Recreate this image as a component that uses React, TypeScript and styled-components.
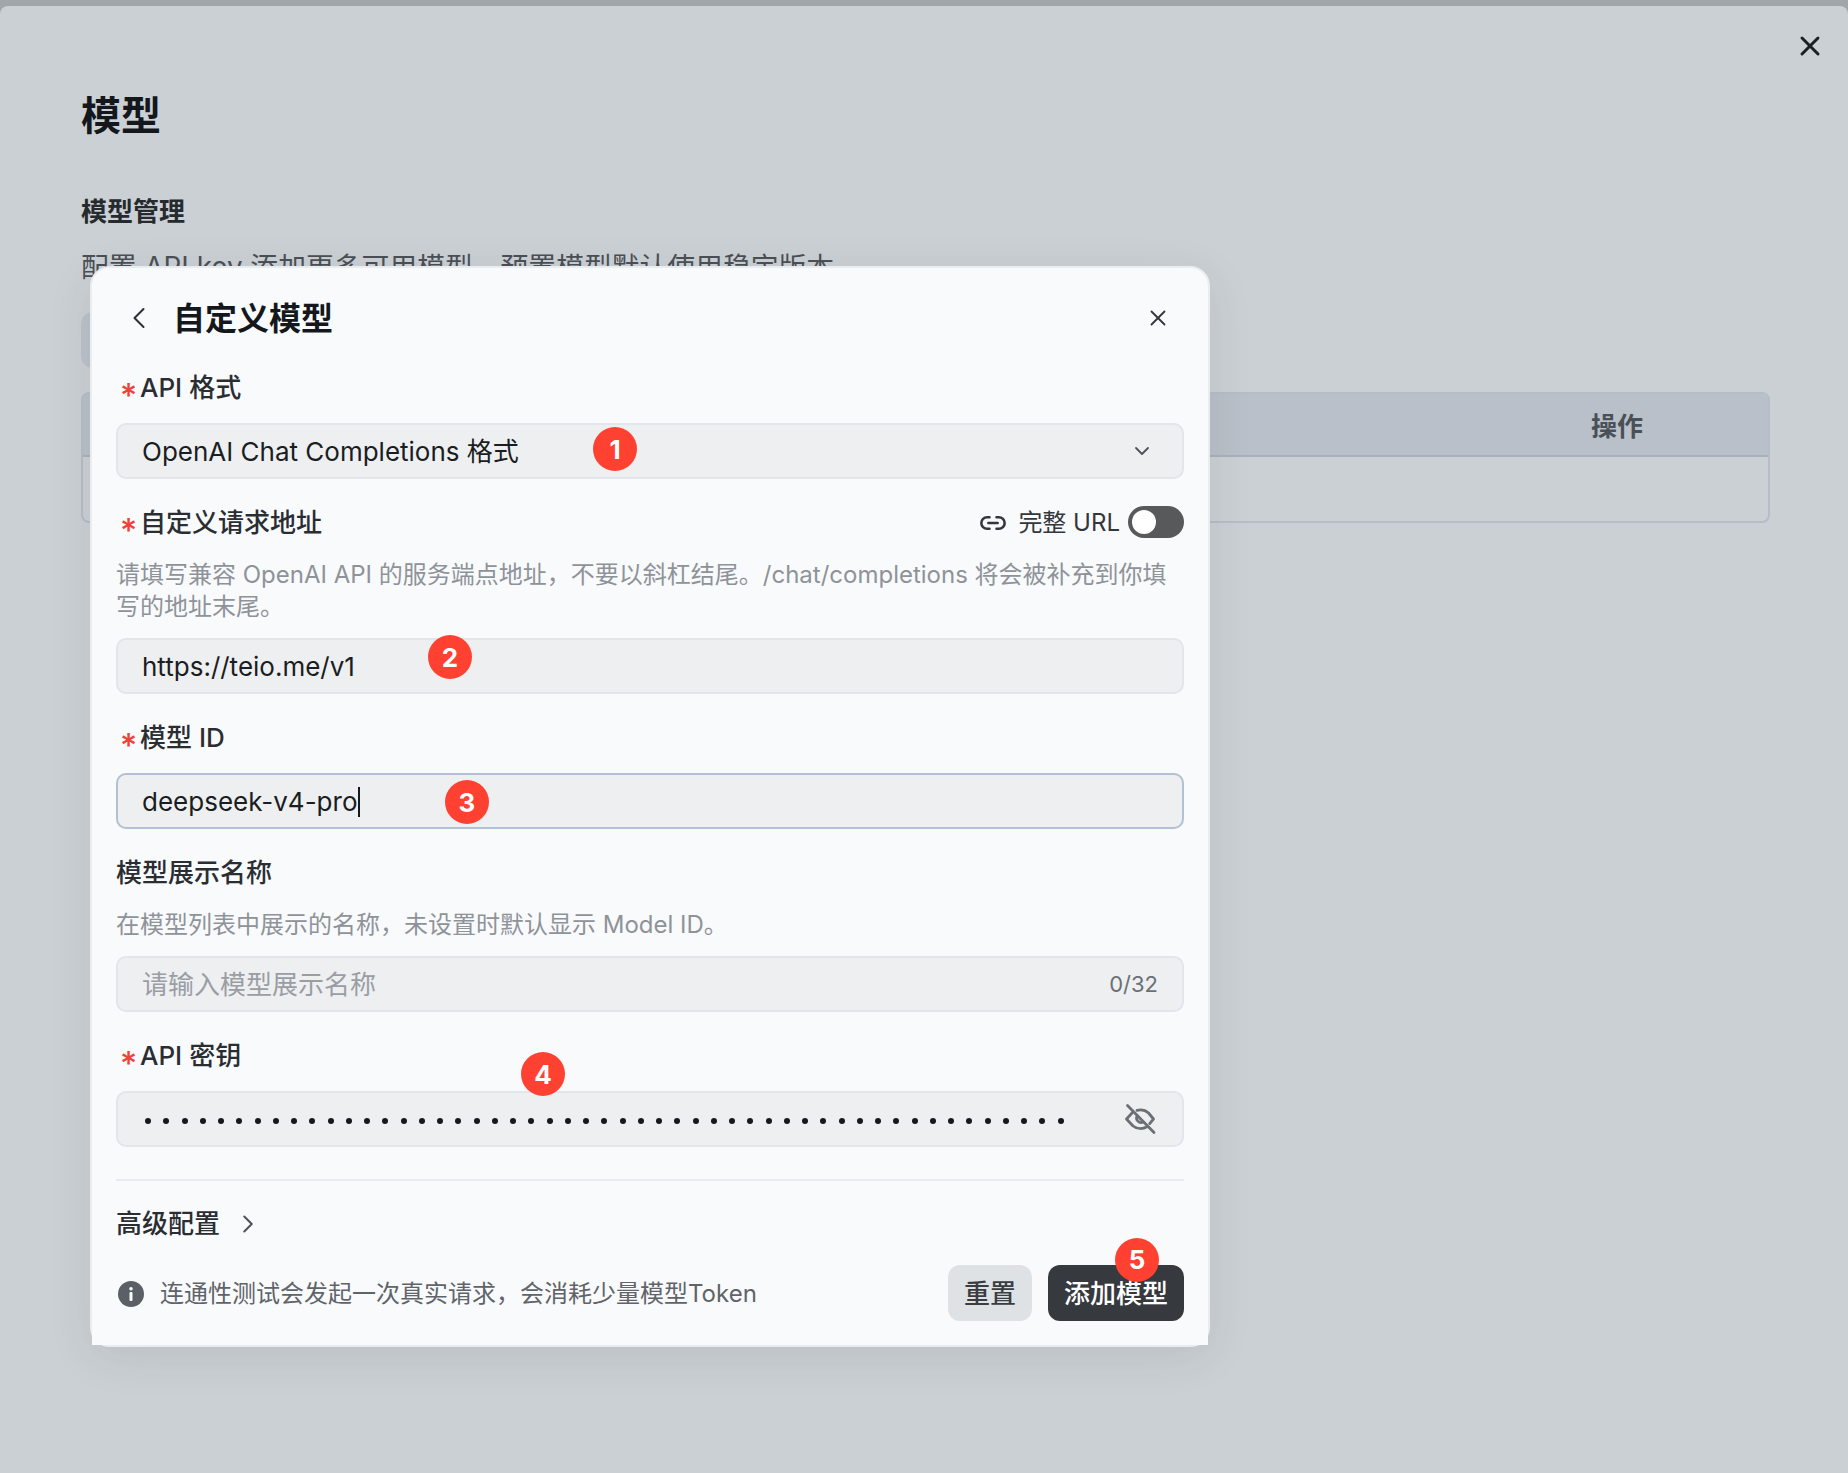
import React from 'react'
import styled, { createGlobalStyle } from 'styled-components'
import { X, ChevronLeft, ChevronDown, ChevronRight, Link2 } from 'lucide-react'

const GlobalStyle = createGlobalStyle`
  html, body {
    margin: 0;
    padding: 0;
    background: #a0a6aa;
  }
  body {
    font-family: Inter, "Noto Sans CJK SC", sans-serif;
    font-size: 26px;
    color: #1d2126;
  }
  * {
    box-sizing: border-box;
  }
`

const Page = styled.div`
  position: relative;
  width: 1848px;
  height: 1473px;
  padding-top: 6px;
  overflow: hidden;
`

const Backdrop = styled.div`
  height: 1467px;
  padding: 71px 78px 0 81px;
  background: #cbd0d4;
  border-radius: 8px 8px 0 0;
`

const PageClose = styled.button`
  position: absolute;
  top: 30px;
  right: 22px;
  width: 32px;
  height: 32px;
  padding: 0;
  border: none;
  background: none;
  color: #1b1f23;
  display: flex;
  align-items: center;
  justify-content: center;
`

const PageTitle = styled.h1`
  margin: 0;
  font-size: 40px;
  line-height: 78px;
  font-weight: 700;
  color: #14181c;
`

const SectionTitle = styled.h2`
  margin: 39px 0 0;
  font-size: 26px;
  line-height: 36px;
  font-weight: 600;
  color: #262a2f;
`

const SectionDesc = styled.p`
  margin: 19px 0 0;
  font-size: 27.8px;
  line-height: 36px;
  color: #4b5056;
`

const GhostButton = styled.div`
  width: 300px;
  height: 56px;
  margin-top: 27px;
  background: #bcc2c9;
  border-radius: 12px;
`

const Table = styled.div`
  margin-top: 24px;
  height: 131px;
  border: 2px solid #b6bdc8;
  border-radius: 8px;
  overflow: hidden;
`

const TableHead = styled.div`
  height: 63px;
  display: flex;
  align-items: center;
  justify-content: flex-end;
  padding-right: 125px;
  background: #b9c0c9;
  border-bottom: 2px solid #a9b1bd;
  font-size: 26px;
  font-weight: 600;
  color: #4a5057;
`

const Modal = styled.section`
  position: absolute;
  left: 90px;
  top: 266px;
  width: 1120px;
  padding: 20px 24px 0;
  background: #f9fafc;
  border: 2px solid #e9ecf0;
  border-radius: 20px;
  box-shadow: 0 10px 44px rgba(40, 46, 52, 0.1);
`

const ModalHeader = styled.header`
  height: 60px;
  display: flex;
  align-items: center;
  margin-bottom: 22px;
`

const BackButton = styled.span`
  display: flex;
  margin: 0 16px 0 5px;
  color: #2d3136;
`

const ModalTitle = styled.h3`
  flex: 1;
  margin: 0;
  padding-top: 2px;
  font-size: 32px;
  line-height: 44px;
  font-weight: 600;
  color: #14181c;
`

const ModalClose = styled.span`
  display: flex;
  margin-right: 13px;
  color: #33373c;
`

const Field = styled.div`
  position: relative;
  margin-bottom: 26px;
`

const LabelRow = styled.div<{ $gap?: number }>`
  display: flex;
  align-items: center;
  justify-content: space-between;
  height: 36px;
  margin-bottom: ${({ $gap }) => $gap ?? 17}px;
`

const Label = styled.label`
  display: flex;
  align-items: center;
  font-size: 26px;
  line-height: 36px;
  font-weight: 500;
  color: #2a2e33;
`

const Star = styled.span`
  width: 20px;
  margin-left: 4px;
  padding-top: 15px;
  color: #ef4136;
  font-size: 33px;
  line-height: 33px;
  font-weight: 500;
`

const Help = styled.p`
  margin: 0 0 15px;
  font-size: 24px;
  line-height: 32px;
  color: #8e9399;
`

const InputBox = styled.div<{ $focus?: boolean }>`
  display: flex;
  align-items: center;
  height: 56px;
  padding: 0 24px;
  background: #eeeff1;
  border: 2px solid ${({ $focus }) => ($focus ? '#b3bfd2' : '#e2e6eb')};
  border-radius: 10px;
  font-size: 26px;
  color: #1a1e22;
`

const InputValue = styled.span<{ $muted?: boolean }>`
  flex: 1;
  white-space: nowrap;
  line-height: 36px;
  padding-top: 1px;
  color: ${({ $muted }) => ($muted ? '#9a9ea4' : 'inherit')};
`

const Caret = styled.span`
  display: inline-block;
  width: 2px;
  height: 30px;
  margin-left: 1px;
  background: #15181c;
  vertical-align: -6px;
`

const SelectArrow = styled.span`
  display: flex;
  margin-right: 4px;
  color: #4d5258;
`

const Counter = styled.span`
  font-size: 22px;
  color: #6a6f75;
`

const UrlToggle = styled.div`
  display: flex;
  align-items: center;
  color: #33373c;
  font-size: 24px;
  line-height: 32px;
`

const UrlText = styled.span`
  margin: 0 8px 0 11px;
`

const Switch = styled.span`
  width: 56px;
  height: 32px;
  margin-bottom: 2px;
  padding: 4px;
  background: #58595b;
  border-radius: 16px;
  display: flex;
`

const Knob = styled.span`
  width: 24px;
  height: 24px;
  background: #fff;
  border-radius: 50%;
`

const Dots = styled.span`
  flex: 1;
  display: flex;
  padding: 3px 0 0 3px;
  gap: 12.25px;
`

const Dot = styled.span`
  width: 6px;
  height: 6px;
  border-radius: 50%;
  background: #15181c;
`

const EyeIcon = styled.svg`
  width: 32px;
  height: 32px;
  margin-right: 2px;
  color: #6b7075;
`

const Divider = styled.hr`
  height: 2px;
  margin: 32px 0 0;
  border: none;
  background: #e8eaed;
`

const Advanced = styled.div`
  display: flex;
  align-items: center;
  height: 36px;
  margin: 25px 0 23px;
  font-size: 26px;
  line-height: 36px;
  font-weight: 500;
  color: #2a2e33;
`

const AdvancedArrow = styled.span`
  display: flex;
  margin-left: 13px;
  color: #4d5258;
`

// 下の角は丸めない: モーダルの角の上に四角く被せる
const Footer = styled.footer`
  display: flex;
  align-items: center;
  gap: 16px;
  margin: 0 -24px;
  padding: 0 24px 24px;
  background: #f9fafc;
`

const Notice = styled.div`
  flex: 1;
  display: flex;
  align-items: center;
  gap: 16px;
  padding: 1px 0 0 2px;
  font-size: 24px;
  line-height: 32px;
  color: #5f6469;
`

const Button = styled.button<{ $primary?: boolean }>`
  position: relative;
  height: 56px;
  padding: 2px 16px 0;
  border: none;
  border-radius: 12px;
  font-family: inherit;
  font-size: 26px;
  line-height: 36px;
  font-weight: 500;
  background: ${({ $primary }) => ($primary ? '#36393d' : '#dfe2e5')};
  color: ${({ $primary }) => ($primary ? '#fff' : '#3a3e43')};
`

const Badge = styled.span<{ $left: number; $top: number }>`
  position: absolute;
  left: ${({ $left }) => $left}px;
  top: ${({ $top }) => $top}px;
  width: 44px;
  height: 44px;
  display: flex;
  align-items: center;
  justify-content: center;
  border-radius: 50%;
  background: #ff4131;
  color: #fff;
  font-size: 26px;
  font-weight: 700;
`

const dots = Array.from({ length: 51 })

const App: React.FC = () => {
  return (
    <Page>
      <GlobalStyle />
      <Backdrop>
        <PageTitle>模型</PageTitle>
        <SectionTitle>模型管理</SectionTitle>
        <SectionDesc>配置 API key 添加更多可用模型，预置模型默认使用稳定版本</SectionDesc>
        <GhostButton />
        <Table>
          <TableHead>操作</TableHead>
        </Table>
      </Backdrop>
      <PageClose>
        <X size={32} strokeWidth={2.2} />
      </PageClose>

      <Modal>
        <ModalHeader>
          <BackButton>
            <ChevronLeft size={36} strokeWidth={1.4} />
          </BackButton>
          <ModalTitle>自定义模型</ModalTitle>
          <ModalClose>
            <X size={26} strokeWidth={1.7} />
          </ModalClose>
        </ModalHeader>

        <Field>
          <LabelRow>
            <Label>
              <Star>*</Star>API 格式
            </Label>
          </LabelRow>
          <InputBox>
            <InputValue>OpenAI Chat Completions 格式</InputValue>
            <SelectArrow>
              <ChevronDown size={24} strokeWidth={1.8} />
            </SelectArrow>
          </InputBox>
          <Badge $left={477} $top={57}>1</Badge>
        </Field>

        <Field>
          <LabelRow $gap={18}>
            <Label>
              <Star>*</Star>自定义请求地址
            </Label>
            <UrlToggle>
              <Link2 size={28} strokeWidth={2.2} />
              <UrlText>完整 URL</UrlText>
              <Switch>
                <Knob />
              </Switch>
            </UrlToggle>
          </LabelRow>
          <Help>
            请填写兼容 OpenAI API 的服务端点地址，不要以斜杠结尾。/chat/completions 将会被补充到你填写的地址末尾。
          </Help>
          <InputBox>
            <InputValue>https://teio.me/v1</InputValue>
          </InputBox>
          <Badge $left={312} $top={130}>2</Badge>
        </Field>

        <Field>
          <LabelRow>
            <Label>
              <Star>*</Star>模型 ID
            </Label>
          </LabelRow>
          <InputBox $focus>
            <InputValue>
              deepseek-v4-pro
              <Caret />
            </InputValue>
          </InputBox>
          <Badge $left={329} $top={60}>3</Badge>
        </Field>

        <Field>
          <LabelRow $gap={18}>
            <Label>模型展示名称</Label>
          </LabelRow>
          <Help>在模型列表中展示的名称，未设置时默认显示 Model ID。</Help>
          <InputBox>
            <InputValue $muted>请输入模型展示名称</InputValue>
            <Counter>0/32</Counter>
          </InputBox>
        </Field>

        <Field>
          <LabelRow>
            <Label>
              <Star>*</Star>API 密钥
            </Label>
          </LabelRow>
          <InputBox>
            <Dots>
              {dots.map((_, index) => (
                <Dot key={index} />
              ))}
            </Dots>
            <EyeIcon viewBox="0 0 32 32" fill="none" stroke="currentColor" strokeWidth="2.8" strokeLinecap="round" strokeLinejoin="round">
              <path d="M8.500 9.500 2.500 16l6.500 7c3.800 2.900 9.500 3.400 14 .8" />
              <path d="M13 7.400c4.200-1 8.800.2 11.500 2.600l5 6-3.800 4.600" />
              <path d="M13.200 12.800a4.500 4.500 0 0 0 6 6.200" />
              <path d="M3.500 2.500 30 29.500" />
            </EyeIcon>
          </InputBox>
          <Badge $left={405} $top={14}>4</Badge>
        </Field>

        <Divider />

        <Advanced>
          高级配置
          <AdvancedArrow>
            <ChevronRight size={30} strokeWidth={1.6} />
          </AdvancedArrow>
        </Advanced>

        <Footer>
          <Notice>
            <svg width="26" height="26" viewBox="0 0 26 26">
              <circle cx="13" cy="13" r="13" fill="#5b6066" />
              <circle cx="13" cy="7.800" r="1.800" fill="#f9fafc" />
              <rect x="11.500" y="11" width="3" height="9" rx="1" fill="#f9fafc" />
            </svg>
            连通性测试会发起一次真实请求，会消耗少量模型Token
          </Notice>
          <Button>重置</Button>
          <Button $primary>
            添加模型
            <Badge $left={67} $top={-27}>5</Badge>
          </Button>
        </Footer>
      </Modal>
    </Page>
  )
}

export default App
